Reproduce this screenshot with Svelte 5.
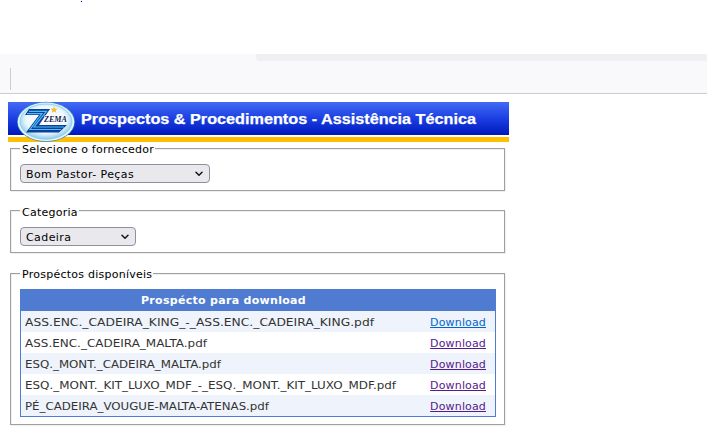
<script>
  const docs = [
    { name: 'ASS.ENC._CADEIRA_KING_-_ASS.ENC._CADEIRA_KING.pdf', w: 349, fresh: true },
    { name: 'ASS.ENC._CADEIRA_MALTA.pdf', w: 182 },
    { name: 'ESQ._MONT._CADEIRA_MALTA.pdf', w: 196 },
    { name: 'ESQ._MONT._KIT_LUXO_MDF_-_ESQ._MONT._KIT_LUXO_MDF.pdf', w: 371 },
    { name: 'PÉ_CADEIRA_VOUGUE-MALTA-ATENAS.pdf', w: 244 }
  ];
</script>

{#snippet chevron()}
  <svg class="chevron" width="8" height="6" viewBox="0 0 8 6"><path d="M1 1.2 4 4.2 7 1.2" fill="none" stroke="#15141a" stroke-width="1.5" stroke-linecap="round" stroke-linejoin="round" /></svg>
{/snippet}

<div class="page">
  <div class="blank"><i class="speck"></i></div>
  <div class="toolbar"><i class="sep"></i><i class="field"></i></div>
  <main>
    <header>
      <svg width="501" height="41" viewBox="0 0 501 41">
        <defs>
          <linearGradient id="bar" x1="0" y1="0" x2="0" y2="1">
            <stop offset="0" stop-color="#446af5" />
            <stop offset=".5" stop-color="#1b3fe2" />
            <stop offset="1" stop-color="#0018bc" />
          </linearGradient>
          <radialGradient id="oval" cx=".5" cy=".45" r=".55">
            <stop offset="0" stop-color="#fff" />
            <stop offset=".7" stop-color="#edf8fd" />
            <stop offset="1" stop-color="#8acbea" />
          </radialGradient>
        </defs>
        <rect width="501" height="33" fill="url(#bar)" />
        <rect y="35" width="501" height="5" fill="#ffbf00" />
        <ellipse cx="38" cy="19.8" rx="29" ry="20" fill="#3188c6" />
        <ellipse cx="38" cy="19.8" rx="28.3" ry="19.3" fill="#e2f4fc" />
        <ellipse cx="38" cy="19.6" rx="26" ry="17.6" fill="url(#oval)" stroke="#7fc3e6" stroke-width=".7" />
        <path d="M21 7H42L31 23H59L51 30.5H18L31 13H17Z" fill="#0b3f9f" />
        <path d="M21 9.3H38.5L26 25H56M19 11.6H34L22 27.5H53" fill="none" stroke="#50bdec" stroke-width="1.2" />
        <path d="m46 4.5 1 2.2 2.5.1-1.9 1.6.7 2.4-2.3-1.4-2.2 1.4.7-2.4-1.9-1.6 2.5-.1Z" fill="#f8ba21" />
        <text x="36" y="20" class="brand" textLength="23" lengthAdjust="spacingAndGlyphs">ZEMA</text>
        <text x="73" y="22" class="title" textLength="395" lengthAdjust="spacingAndGlyphs">Prospectos &amp; Procedimentos - Assistência Técnica</text>
      </svg>
    </header>
    <fieldset>
      <legend>Selecione o fornecedor</legend>
      <button class="select wide"><span>Bom Pastor- Peças</span>{@render chevron()}</button>
    </fieldset>
    <fieldset class="category">
      <legend>Categoria</legend>
      <button class="select"><span>Cadeira</span>{@render chevron()}</button>
    </fieldset>
    <fieldset class="list">
      <legend>Prospéctos disponíveis</legend>
      <div class="table">
        <div class="head"><b>Prospécto para download</b></div>
        {#each docs as doc}
          <div class="row">
            <svg width="400" height="21"><text x="4" y="15" textLength={doc.w} lengthAdjust="spacingAndGlyphs">{doc.name}</text></svg>
            <a href="#download" class:fresh={doc.fresh}>Download</a>
          </div>
        {/each}
      </div>
    </fieldset>
  </main>
</div>

<style>
  .page { width: 707px; height: 444px; overflow: hidden; background: #fff; color: #000; font: 11px/14px Verdana, "DejaVu Sans", sans-serif; }
  .blank { height: 54px; padding-left: 81px; box-sizing: border-box; display: flex; }
  .speck { width: 1px; height: 1px; margin-top: 1px; background: #000080; box-shadow: 0 0 1px #8080ff; }
  .toolbar { height: 40px; box-sizing: border-box; background: #f9f9fb; border-bottom: 1px solid #ccc; display: flex; padding-left: 10px; }
  .sep { width: 1px; height: 22px; margin-top: 14px; background: #ccc; }
  .field { flex: 1; height: 7px; margin-left: 245px; background: #f0f0f4; border-bottom-left-radius: 4px; }
  main { width: 501px; padding: 8px 0 0 8px; }
  header { height: 40px; position: relative; z-index: 1; }
  header svg { display: block; overflow: visible; }
  .brand { font: italic bold 8px "Liberation Serif", serif; fill: #101c50; stroke: #fff; stroke-width: 1.2; paint-order: stroke; }
  .title { font: bold 15px "Liberation Sans", Arial, sans-serif; fill: #fff; stroke: #fff; stroke-width: .25; }
  fieldset { margin: 0 0 13px 2px; width: 495px; height: 49px; box-sizing: border-box; border: 1px solid #a0a0a0; box-shadow: 1px 1px #efefef, inset 1px 1px #efefef; padding: 9px 9px 0; min-width: 0; }
  legend { padding: 0 1px 0 2px; height: 13px; line-height: 15px; display: block; letter-spacing: .25px; }
  .category { padding-top: 10px; margin-bottom: 14px; }
  .category legend { line-height: 17px; }
  .select { width: 116px; height: 19px; box-sizing: border-box; display: flex; align-items: center; justify-content: space-between; border: 1px solid #8f8f9d; border-radius: 4px; background: #e9e9ed; color: #000; padding: 1px 6px 0 5px; font: inherit; letter-spacing: .42px; }
  .select span { padding-top: 1px; }
  .wide { width: 190px; }
  .chevron { display: block; }
  .list { height: 158px; }
  .table { width: 476px; height: 128px; box-sizing: border-box; border: 1px solid #4f7cd1; }
  .head { height: 21px; line-height: 22px; background: #4f7cd1; color: #fff; padding-left: 120px; letter-spacing: .3px; }
  .row { height: 21px; display: flex; justify-content: space-between; align-items: center; padding-right: 9px; color: #333; }
  .row:nth-child(even) { background: #eff3fb; }
  .row svg { display: block; fill: #333; }
  a { color: #551a8b; text-underline-offset: 1px; letter-spacing: .15px; padding-top: 2px; }
  .fresh { color: #0066cc; }
</style>
